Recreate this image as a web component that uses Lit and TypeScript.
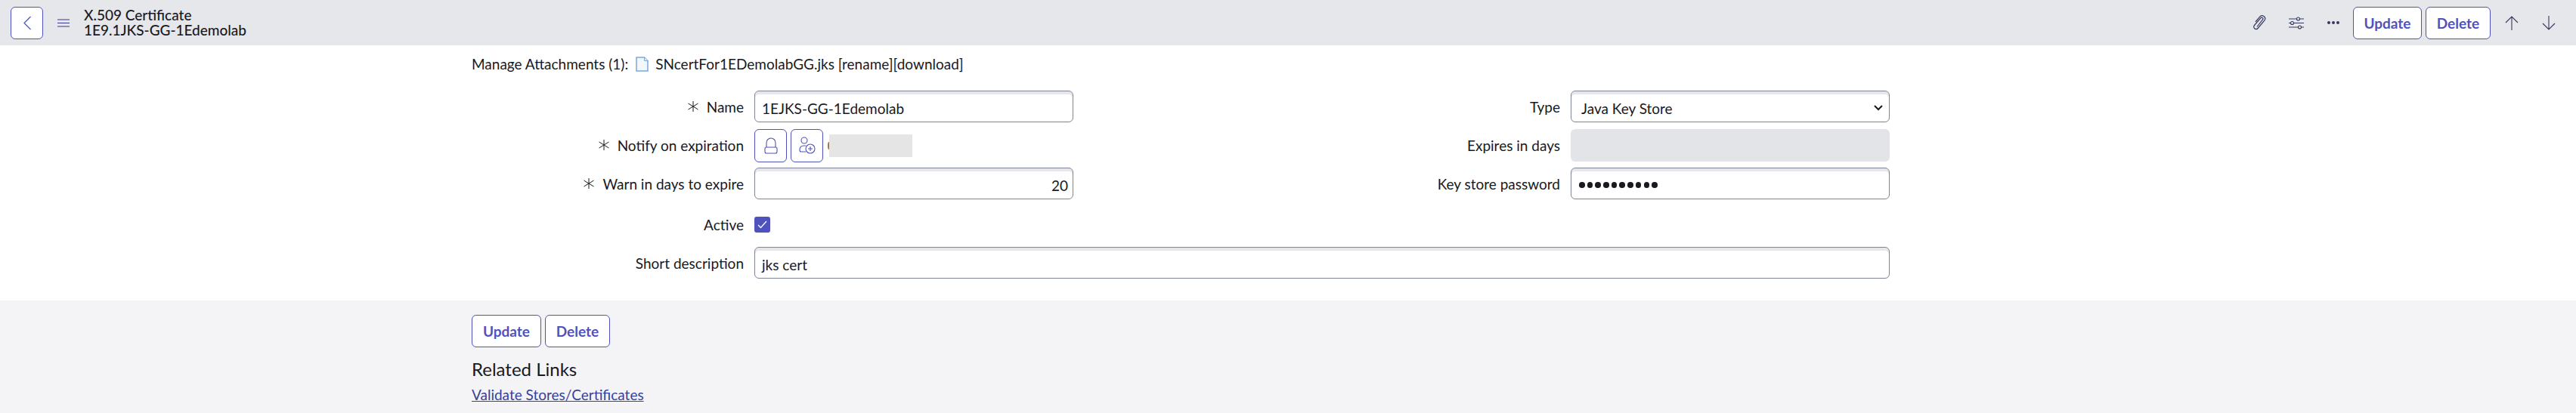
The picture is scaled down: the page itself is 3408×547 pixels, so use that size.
import { LitElement, html, css } from 'lit'
import { customElement } from 'lit/decorators.js'

@customElement('app-root')
export class AppRoot extends LitElement {
  static styles = css`
    :host {
      display: block;
      height: 547px;
      overflow: hidden;
      font-family: 'Lato', 'Liberation Sans', sans-serif;
      font-size: 19px;
      color: #181a1f;
      background: #fff;
    }

    * {
      box-sizing: border-box;
    }

    .header {
      display: flex;
      align-items: center;
      height: 60px;
      padding: 0 12px 0 14px;
      background: #e6e7eb;
    }

    button {
      font-family: inherit;
      background: #fff;
      border: 1px solid #4f52bd;
      border-radius: 6px;
      color: #4f52bd;
      padding: 0;
    }

    .square {
      display: flex;
      align-items: center;
      justify-content: center;
      width: 43px;
      height: 43px;
    }

    .menu {
      display: flex;
      margin-left: 19px;
    }

    .title {
      margin-left: 19px;
      font-size: 19px;
      font-weight: 500;
      line-height: 20px;
    }

    .spacer {
      flex: 1;
    }

    .icon {
      display: flex;
      align-items: center;
      justify-content: center;
      width: 49px;
      height: 43px;
      color: #34385f;
    }

    .text-btn {
      height: 43px;
      font-size: 19px;
      font-weight: 700;
    }

    .update {
      width: 91px;
      margin-left: 2px;
    }

    .delete {
      width: 86px;
      margin-left: 5px;
    }

    .arrows {
      margin-left: 3px;
      display: flex;
    }

    .form {
      height: 338px;
      padding: 14px 0 0 624px;
    }

    .attachments {
      display: flex;
      align-items: center;
      height: 22px;
      line-height: 22px;
    }

    .attachments svg {
      margin: 0 9px 0 10px;
    }

    .grid {
      display: grid;
      grid-template-columns: 360px 422px 630px 422px;
      grid-auto-rows: min-content;
      column-gap: 14px;
      margin-top: 24px;
      width: 1876px;
    }

    .row {
      display: contents;
    }

    .label {
      display: flex;
      align-items: center;
      justify-content: flex-end;
      height: 42px;
      margin-bottom: 9px;
      white-space: nowrap;
    }

    .label svg {
      margin-right: 10px;
    }

    .input {
      height: 42px;
      margin-bottom: 9px;
      border: 1px solid #7f8494;
      border-radius: 6px;
      box-shadow: inset 0 4px 0 #e6e7eb;
      background: #fff;
      padding: 4px 6px 0 9px;
      display: flex;
      align-items: center;
    }

    .input.num {
      justify-content: flex-end;
    }

    .readonly {
      height: 43px;
      margin-bottom: 8px;
      background: #e3e4e8;
      border-radius: 6px;
    }

    .select {
      padding-left: 13px;
      padding-right: 8px;
      justify-content: space-between;
    }

    .dots {
      padding-left: 10px;
    }

    .dots span {
      width: 7.500px;
      height: 7.500px;
      margin-right: 3.200px;
      border-radius: 50%;
      background: #181a1f;
    }

    .refs {
      display: flex;
      align-items: center;
      height: 43px;
    }

    .refs .square {
      height: 44px;
      margin-right: 5px;
    }

    .mark {
      width: 3px;
      height: 10px;
      margin-left: 1px;
      border-left: 2px solid #9a7a4a;
      border-radius: 50%;
    }

    .blur {
      width: 110px;
      height: 30px;
      margin-left: -1px;
      background: #e5e5e5;
    }

    .active-label {
      height: 21px;
      margin: 14px 0 19px;
    }

    .check {
      display: flex;
      align-items: center;
      justify-content: center;
      grid-column: 2;
      justify-self: start;
      width: 21px;
      height: 21px;
      margin: 14px 0 19px;
      border-radius: 3px;
      background: #4f52bd;
    }

    .short-label {
      grid-column: 1;
    }

    .wide {
      grid-column: 2 / 5;
    }

    .footer {
      height: 149px;
      padding: 19px 0 0 624px;
      background: #f4f4f7;
    }

    .footer-buttons {
      display: flex;
    }

    .footer-buttons .update {
      width: 92px;
      margin-left: 0;
    }

    h2 {
      margin: 16px 0 0;
      font-size: 24px;
      font-weight: 400;
      line-height: 26px;
    }

    a {
      display: inline-block;
      margin-top: 9px;
      color: #34429b;
      text-decoration: underline;
    }
  `

  private star() {
    return html`<svg width="16" height="14" viewBox="0 0 16 14" fill="none" stroke="#181a1f" stroke-width="1">
      <path d="M8 0v14M1.500 3l13 8M14.500 3l-13 8" />
    </svg>`
  }

  render() {
    return html`
      <div class="header">
        <button class="square" aria-label="Back">
          <svg width="12" height="19" viewBox="0 0 12 19" fill="none" stroke="#4f52bd" stroke-width="1.200">
            <path d="M10.500 1 2 9.500l8.500 8.500" />
          </svg>
        </button>
        <span class="menu">
          <svg width="16" height="11" viewBox="0 0 16 11" fill="none" stroke="#34388f" stroke-width="1">
            <path d="M0 1h16M0 5.500h16M0 10h16" />
          </svg>
        </span>
        <div class="title">X.509 Certificate<br />1E9.1JKS-GG-1Edemolab</div>
        <div class="spacer"></div>
        <span class="icon">
          <svg width="18" height="20" viewBox="0 0 18 20" fill="none" stroke="currentColor" stroke-width="1.200">
            <path d="M6 15.500 13.500 6a1.700 1.700 0 0 0-2.600-2.200L2.500 13.500a3 3 0 0 0 4.600 4L16 7a4 4 0 0 0-6-5.200L4 9" />
          </svg>
        </span>
        <span class="icon">
          <svg width="20" height="17" viewBox="0 0 20 17" fill="none" stroke="currentColor" stroke-width="1.100">
            <path d="M0 3h10.500M14.500 3H20M0 8.500h2.500M6.500 8.500H20M0 14h12.500M16.500 14H20" />
            <circle cx="12.500" cy="3" r="2" />
            <circle cx="4.500" cy="8.500" r="2" />
            <circle cx="14.500" cy="14" r="2" />
          </svg>
        </span>
        <span class="icon">
          <svg width="16" height="4" viewBox="0 0 16 4" fill="currentColor">
            <circle cx="2" cy="2" r="2" />
            <circle cx="8" cy="2" r="2" />
            <circle cx="14" cy="2" r="2" />
          </svg>
        </span>
        <button class="text-btn update">Update</button>
        <button class="text-btn delete">Delete</button>
        <span class="arrows">
          <span class="icon">
            <svg width="18" height="19" viewBox="0 0 18 19" fill="none" stroke="currentColor" stroke-width="1.100">
              <path d="M9 19V1M1 9l8-8 8 8" />
            </svg>
          </span>
          <span class="icon">
            <svg width="18" height="19" viewBox="0 0 18 19" fill="none" stroke="currentColor" stroke-width="1.100">
              <path d="M9 0v18M1 10l8 8 8-8" />
            </svg>
          </span>
        </span>
      </div>

      <div class="form">
        <div class="attachments">
          <span>Manage Attachments (1):</span>
          <svg width="17" height="20" viewBox="0 0 17 20" fill="#f3f7fc" stroke="#7aa8dc" stroke-width="1.500">
            <path d="M1 1h10.500L16 5.500V19H1z" />
            <path d="M11.500 1v4.500H16" fill="#dfe9f6" stroke-width="1" />
          </svg>
          <span>SNcertFor1EDemolabGG.jks [rename][download]</span>
        </div>

        <div class="grid">
          <div class="row">
            <div class="label">${this.star()}Name</div>
            <div class="input">1EJKS-GG-1Edemolab</div>
            <div class="label">Type</div>
            <div class="input select">
              Java Key Store
              <svg width="12" height="8" viewBox="0 0 12 8" fill="none" stroke="#181a1f" stroke-width="2">
                <path d="M1 1l5 5 5-5" />
              </svg>
            </div>
          </div>
          <div class="row">
            <div class="label">${this.star()}Notify on expiration</div>
            <div class="refs">
              <button class="square" aria-label="Unlock">
                <svg width="18" height="24" viewBox="0 0 18 24" fill="none" stroke="#4f52bd" stroke-width="1.100">
                  <path d="M3 14V8a6 6 0 0 1 12 0v6" />
                  <rect x="1" y="14" width="16" height="8" rx="2" />
                </svg>
              </button>
              <button class="square" aria-label="Add me">
                <svg width="22" height="24" viewBox="0 0 22 24" fill="none" stroke="#4f52bd" stroke-width="1.100">
                  <circle cx="7" cy="5" r="4" />
                  <path d="M9 12H6a5 5 0 0 0-5 5v1a2 2 0 0 0 2 2h6" />
                  <circle cx="15" cy="16" r="6" />
                  <path d="M15 13v6M12 16h6" />
                </svg>
              </button>
              <span class="mark"></span>
              <div class="blur"></div>
            </div>
            <div class="label">Expires in days</div>
            <div class="readonly"></div>
          </div>
          <div class="row">
            <div class="label">${this.star()}Warn in days to expire</div>
            <div class="input num">20</div>
            <div class="label">Key store password</div>
            <div class="input dots">
              ${Array.from({ length: 10 }, () => html`<span></span>`)}
            </div>
          </div>
          <div class="row">
            <div class="label active-label">Active</div>
            <div class="check">
              <svg width="13" height="11" viewBox="0 0 13 11" fill="none" stroke="#fff" stroke-width="1.300">
                <path d="M1 6l3.500 3.500L12 1" />
              </svg>
            </div>
          </div>
          <div class="row">
            <div class="label short-label">Short description</div>
            <div class="input wide">jks cert</div>
          </div>
        </div>
      </div>

      <div class="footer">
        <div class="footer-buttons">
          <button class="text-btn update">Update</button>
          <button class="text-btn delete">Delete</button>
        </div>
        <h2>Related Links</h2>
        <a href="#">Validate Stores/Certificates</a>
      </div>
    `
  }
}
